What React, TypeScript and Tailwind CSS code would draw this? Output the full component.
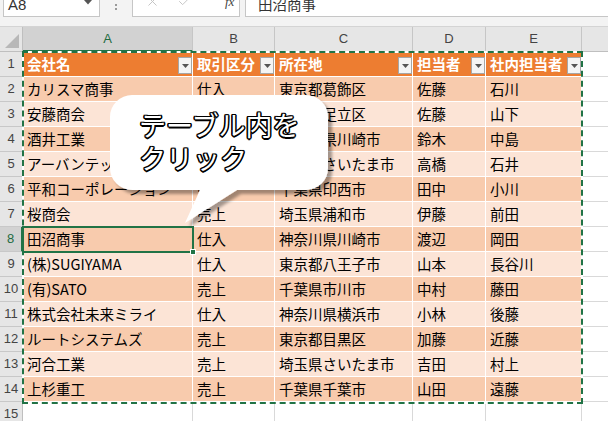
import React from "react";
import { X, Check } from "lucide-react";

type Row = [string, string, string, string, string];

const rows: Row[] = [
  ["カリスマ商事", "仕入", "東京都葛飾区", "佐藤", "石川"],
  ["安藤商会", "仕入", "東京都足立区", "佐藤", "山下"],
  ["酒井工業", "売上", "神奈川県川崎市", "鈴木", "中島"],
  ["アーバンテック", "仕入", "埼玉県さいたま市", "高橋", "石井"],
  ["平和コーポレーション", "売上", "千葉県印西市", "田中", "小川"],
  ["桜商会", "売上", "埼玉県浦和市", "伊藤", "前田"],
  ["田沼商事", "仕入", "神奈川県川崎市", "渡辺", "岡田"],
  ["(株)SUGIYAMA", "仕入", "東京都八王子市", "山本", "長谷川"],
  ["(有)SATO", "売上", "千葉県市川市", "中村", "藤田"],
  ["株式会社未来ミライ", "仕入", "神奈川県横浜市", "小林", "後藤"],
  ["ルートシステムズ", "売上", "東京都目黒区", "加藤", "近藤"],
  ["河合工業", "売上", "埼玉県さいたま市", "吉田", "村上"],
  ["上杉重工", "売上", "千葉県千葉市", "山田", "遠藤"],
];

const headers = ["会社名", "取引区分", "所在地", "担当者", "社内担当者"];
const widths = ["w-[170px]", "w-[82px]", "w-[138px]", "w-[73px]", "w-[96px]"];

const FilterButton = () => (
  <div className="ml-auto mb-[2px] self-end h-[17px] w-[14px] shrink-0 bg-[#f4f4f4] border border-[#a6a6a6] flex items-center justify-center">
    <svg width="7" height="4" viewBox="0 0 7 4">
      <path d="M0 0H7L3.5 4Z" fill="#555" />
    </svg>
  </div>
);

const RowHeader = ({ n, active }: { n: number; active?: boolean }) => (
  <div
    className={`w-[23px] shrink-0 flex items-center justify-center border-b border-[#c8c8c8] text-[13px] font-['Liberation_Sans',sans-serif] ${
      active
        ? "bg-[#d2d2d2] text-[#1e6b41] border-r-2 border-r-[#217346]"
        : "bg-[#e6e6e6] text-[#444] border-r border-r-[#bfbfbf]"
    }`}
  >
    {n}
  </div>
);

export default function App() {
  return (
    <div className="relative w-[608px] h-[421px] overflow-hidden bg-white font-['Noto_Sans_CJK_JP','Noto_Sans',sans-serif] text-black">
      {/* formula bar */}
      <div className="h-[27px] bg-[#f3f3f3] border-b border-[#d4d4d4]">
        <div className="flex h-[17px]">
          <div className="ml-[3px] w-[97px] bg-white border border-t-0 border-[#c6c6c6] flex justify-between pl-[4px] pr-[7px] overflow-hidden">
            <span className="-mt-[5px] leading-[20px] text-[15px] text-[#333] font-['Liberation_Sans',sans-serif]">A8</span>
            <svg width="8" height="5" viewBox="0 0 8 5" className="mt-0">
              <path d="M0 0H8L4 4.5Z" fill="#555" />
            </svg>
          </div>
          <div className="w-[32px] flex flex-col items-center pt-[4px] gap-[2px]">
            <span className="w-[2px] h-[2px] bg-[#9a9a9a]" />
            <span className="w-[2px] h-[2px] bg-[#9a9a9a]" />
          </div>
          <div className="w-[108px] bg-white border border-t-0 border-[#c6c6c6] flex items-start overflow-hidden">
            <X className="ml-[12px] -mt-[6px] text-[#c2c2c2]" size={15} strokeWidth={1.5} />
            <Check className="ml-[17px] -mt-[6px] text-[#c2c2c2]" size={15} strokeWidth={1.5} />
            <span className="ml-[33px] -mt-[7px] leading-[18px] text-[13px] italic text-[#444] font-['Liberation_Serif',serif]">fx</span>
          </div>
          <div className="ml-[5px] flex-1 bg-white border border-t-0 border-r-0 border-[#c6c6c6] pl-[12px] overflow-hidden">
            <span className="block -mt-[6px] leading-[20px] text-[14.5px] text-[#333]">田沼商事</span>
          </div>
        </div>
      </div>

      {/* column headers */}
      <div className="flex h-[25px] text-[13px] text-[#444] font-['Liberation_Sans',sans-serif]">
        <div className="w-[23px] shrink-0 bg-[#e6e6e6] border-r border-b border-[#bfbfbf] flex items-end justify-end p-[3px]">
          <svg width="14" height="14" viewBox="0 0 14 14">
            <path d="M14 0V14H0Z" fill="#b8b8b8" />
          </svg>
        </div>
        {["A", "B", "C", "D", "E"].map((c, i) => (
          <div
            key={c}
            className={`${widths[i]} shrink-0 flex items-center justify-center border-r border-[#c6c6c6] ${
              i === 0
                ? "bg-[#d2d2d2] text-[#1e6b41] border-b-2 border-b-[#217346]"
                : "bg-[#e6e6e6] border-b border-b-[#bfbfbf]"
            }`}
          >
            {c}
          </div>
        ))}
        <div className="flex-1 bg-[#e6e6e6] border-b border-[#bfbfbf]" />
      </div>

      {/* table header row */}
      <div className="flex h-[25px]">
        <RowHeader n={1} />
        {headers.map((h, i) => (
          <div
            key={h}
            className={`${widths[i]} shrink-0 flex items-center bg-[#ed7d31] border-r border-b border-white pl-[4px] text-[14.5px] font-bold text-white whitespace-nowrap overflow-hidden`}
          >
            <span>{h}</span>
            <FilterButton />
          </div>
        ))}
        <div className="flex-1 border-b border-[#d9d9d9]" />
      </div>

      {/* data rows */}
      {rows.map((r, ri) => (
        <div key={ri} className="flex h-[25px]">
          <RowHeader n={ri + 2} active={ri === 6} />
          {r.map((v, ci) => (
            <div
              key={ci}
              className={`${widths[ci]} shrink-0 flex items-center border-r border-b border-white pl-[4px] text-[14.5px] whitespace-nowrap overflow-hidden ${
                ri % 2 === 0 ? "bg-[#f8cbad]" : "bg-[#fce4d6]"
              }`}
            >
              {v}
            </div>
          ))}
          <div className="flex-1 border-b border-[#d9d9d9]" />
        </div>
      ))}

      {/* row 15 */}
      <div className="flex h-[25px]">
        <RowHeader n={15} />
        {widths.map((w, i) => (
          <div key={i} className={`${w} shrink-0 border-r border-b border-[#d9d9d9]`} />
        ))}
        <div className="flex-1 border-b border-[#d9d9d9]" />
      </div>

      {/* copy marquee around table */}
      <div className="absolute left-[22px] top-[51px] w-[561px] h-[353px] border-2 border-white pointer-events-none">
        <div className="absolute -inset-[2px] border-2 border-dashed border-[#217346]" />
      </div>

      {/* active cell A8 */}
      <div className="absolute left-[22px] top-[226px] w-[172px] h-[27px] border-2 border-[#217346] pointer-events-none">
        <div className="absolute -right-[4px] -bottom-[4px] w-[6px] h-[6px] bg-[#217346] border border-white" />
      </div>

      {/* callout */}
      <svg className="absolute left-0 top-0 pointer-events-none" width="608" height="421" viewBox="0 0 608 421">
        <defs>
          <filter id="sh" x="-10%" y="-10%" width="130%" height="140%">
            <feDropShadow dx="4" dy="4" stdDeviation="1.5" floodColor="#000" floodOpacity="0.35" />
          </filter>
        </defs>
        <path
          d="M132 95H306A22 22 0 0 1 328 117V168A22 22 0 0 1 306 190H237L185 223L200 190H132A22 22 0 0 1 110 168V117A22 22 0 0 1 132 95Z"
          fill="#fff"
          filter="url(#sh)"
        />
      </svg>
      <div className="absolute left-[139px] top-[108px] text-[27px] leading-[33px] text-white whitespace-nowrap [text-shadow:1.5px_0_0_#000,-1.5px_0_0_#000,0_1.5px_0_#000,0_-1.5px_0_#000,1.2px_1.2px_0_#000,-1.2px_-1.2px_0_#000,1.2px_-1.2px_0_#000,-1.2px_1.2px_0_#000]">
        <div>テーブル内を</div>
        <div>クリック</div>
      </div>
    </div>
  );
}
